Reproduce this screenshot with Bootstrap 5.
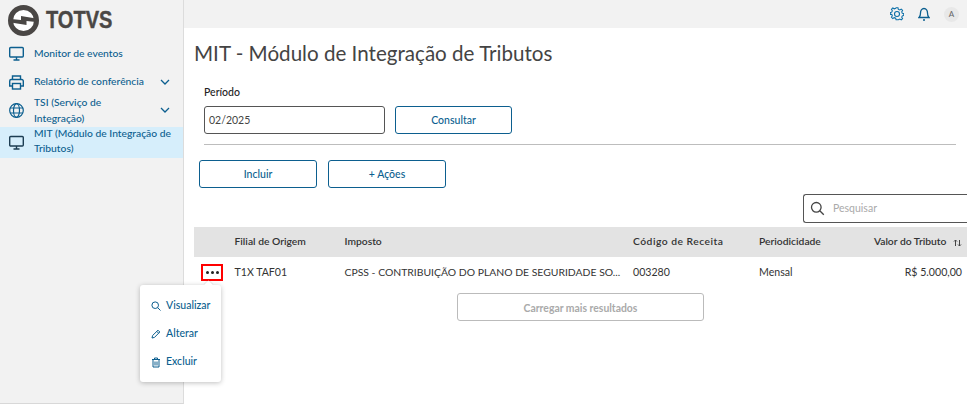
<!DOCTYPE html>
<html lang="pt-BR"><head><meta charset="utf-8">
<link href="https://cdn.jsdelivr.net/npm/bootstrap@5.3.0/dist/css/bootstrap.min.css" rel="stylesheet">
<style>
html,body{height:405px;overflow:hidden;background:#fff}
body{font-family:Lato,"Open Sans",sans-serif;font-size:10.5px;color:#333;position:relative}
.shell{height:405px}
.side{width:184px;flex:none;background:#f2f2f2;border-right:1px solid #dcdcdc;border-bottom:1px solid #d8d8d8;height:404px}
.brand{height:37px;padding:3px 0 0 8px;gap:7px}
.brand-name{display:inline-block;font-family:"Liberation Sans",sans-serif;font-weight:700;font-size:23px;color:#4a4745;line-height:30px;transform:scaleX(.87);transform-origin:left center;-webkit-text-stroke:.4px #4a4745}
.menu-row{display:flex;align-items:center;color:#0c5f8f;font-size:10.3px;line-height:15.5px;font-weight:500;padding:0 13px 0 8px}
.menu-row svg.mi{flex:none;width:17px;height:17px;margin-right:9px}
.menu-row .lbl{flex:1}
.r1{height:33px}
.r2{height:24px}
.r3{height:31px;margin-top:1px}
.r3 .lbl{max-width:100px;margin-right:auto}
.r4{height:31px;background:#d6eefb;padding-right:4px;margin-top:1px}
.r4 .lbl{margin-top:-3px}
.main{flex:1;min-width:0}
.topbar{height:28px;background:#f2f2f2;gap:14px;padding-right:8px}
.avatar{width:15px;height:15px;border-radius:50%;background:#e8e8e8;color:#666;font-size:8px;line-height:15px;text-align:center}
.page{padding:0 0 0 10px}
.ttl{font-size:20.6px;font-weight:400;color:#444;margin:12px 0 0 0;line-height:27px}
.fld{padding-left:10px;margin-top:18px}
.lab{font-size:10.5px;color:#222;line-height:14px;font-weight:500}
.inrow{gap:10px;margin-top:7px}
.inp{width:181px;height:28px;border:1px solid #555;border-radius:3px;color:#444;font-size:10.5px;padding:0 4px;line-height:26px}
.bt{height:28px;border:1px solid #0c5f8f;border-radius:3px;background:#fff;color:#0c5f8f;font-size:10.5px;font-weight:500;line-height:26px;text-align:center;padding:0;width:118px}
.bt-q{width:117px}
.sep{height:1px;background:#bdbdbd;margin:10px 0 0 10px;width:752px}
.acts{gap:11px;margin:15px 0 0 5px}
.srow{margin-top:6px;height:29px}
.srch{width:165px;height:29px;border:1px solid #555;border-right-color:#888;border-radius:3px 0 0 3px;color:#aaa;font-size:10.5px;gap:8px;padding-left:6px;margin-right:-1px}
.thead,.trow{display:flex;align-items:center}
.thead{height:30px;background:#e3e3e3;margin-top:4px;font-weight:600;color:#333;font-size:10.3px}
.trow{height:30px;color:#333;font-size:10.6px}
.trow .c1,.trow .c2,.trow .c3,.trow .c4,.trow .c5{padding-top:2px}
.c0{width:40.5px;flex:none}.c1{width:110px;flex:none}.c2{width:288.5px;flex:none;white-space:nowrap;padding-right:8px}.c3{width:126px;flex:none}.c4{width:96px;flex:none}.c5{flex:1;text-align:right;padding-right:5px;white-space:nowrap}
.trow .c2{font-size:10.4px}
.hc3{letter-spacing:.5px}
.dots{width:22px;height:17px;border:2px solid #f00;margin-left:7px;display:flex;align-items:center;justify-content:center;gap:2px}
.dots i{width:3px;height:3px;background:#222;border-radius:50%;display:block}
.more{width:247px;height:28px;border:1px solid #bbb;border-radius:3px;background:#fff;color:#aaa;font-weight:700;font-size:10.4px;line-height:26px;text-align:center;margin:6px 0 0 263px}
.pop{position:absolute;left:140px;top:285px;width:81px;height:97px;background:#fff;border-radius:3px;box-shadow:0 1px 5px rgba(0,0,0,.25);z-index:5;padding-top:7px}
.pop::before{content:"";position:absolute;left:65px;top:-3px;width:7px;height:7px;background:#fff;transform:rotate(45deg);box-shadow:-1px -1px 1px rgba(0,0,0,.08)}
.pit{display:flex;align-items:center;height:28px;padding-left:11px;gap:5px;color:#0c5f8f;font-size:10.5px;font-weight:500}
</style></head><body>
<div class="d-flex shell">
<aside class="side">
<div class="brand d-flex align-items-center">
<svg width="31" height="31" viewBox="0 0 31 31"><circle cx="15.500" cy="15.500" r="13" fill="#fff" stroke="#4a4745" stroke-width="5"/><polygon points="13,11 28,13.500 28,17 18.500,16 18.500,20 3,17.500 3,14 13,15" fill="#4a4745"/></svg>
<span class="brand-name">TOTVS</span>
</div>
<div class="menu-row r1"><svg class="mi" viewBox="0 0 17 17" fill="none" stroke="#0c5f8f" stroke-width="1.400"><rect x="1.700" y="2.500" width="13.600" height="9.500" rx="1"/><path d="M8.500 12v3M5.500 15h6"/></svg><span class="lbl">Monitor de eventos</span></div>
<div class="menu-row r2"><svg class="mi" viewBox="0 0 17 17" fill="none" stroke="#0c5f8f" stroke-width="1.400"><path d="M4.500 5.500V2h8v3.500"/><path d="M4 12H1.700V7a1.500 1.500 0 0 1 1.500-1.500h10.600A1.500 1.500 0 0 1 15.300 7v5H13"/><rect x="4.500" y="9.500" width="8" height="5.500"/></svg><span class="lbl">Relatório de conferência</span><svg width="10" height="7" viewBox="0 0 10 7" fill="none" stroke="#0c5f8f" stroke-width="1.300"><path d="M1 1l4 4 4-4"/></svg></div>
<div class="menu-row r3"><svg class="mi" viewBox="0 0 17 17" fill="none" stroke="#0c5f8f" stroke-width="1.200"><circle cx="8.500" cy="8.500" r="6.800"/><ellipse cx="8.500" cy="8.500" rx="3" ry="6.800"/><path d="M2 6h13M2 11h13"/></svg><span class="lbl">TSI (Serviço de Integração)</span><svg width="10" height="7" viewBox="0 0 10 7" fill="none" stroke="#0c5f8f" stroke-width="1.300"><path d="M1 1l4 4 4-4"/></svg></div>
<div class="menu-row r4"><svg class="mi" viewBox="0 0 17 17" fill="none" stroke="#1d3d52" stroke-width="1.400"><rect x="1.700" y="2.500" width="13.600" height="9.500" rx="1"/><path d="M8.500 12v3M5.500 15h6"/></svg><span class="lbl">MIT (Módulo de Integração de Tributos)</span></div>
</aside>
<main class="main">
<div class="topbar d-flex align-items-center justify-content-end">
<svg width="14" height="14" viewBox="0 0 14 14" fill="none" stroke="#0c6fa8" stroke-width="1.100"><path d="M6 1h2l.4 1.700 1.500.6 1.500-.9 1.400 1.400-.9 1.500.6 1.500 1.500.2v2l-1.500.4-.6 1.500.9 1.500-1.400 1.300-1.500-.9-1.500.6L8 13.500H6l-.4-1.600-1.500-.6-1.500.9-1.400-1.300.9-1.500-.6-1.500L0 8V6l1.500-.4.600-1.500-.9-1.500 1.400-1.400 1.500.9 1.500-.6z" transform="translate(.3 -.2) scale(.96)"/><circle cx="7" cy="7" r="2.500"/></svg>
<svg width="12" height="14" viewBox="0 0 12 14" fill="none" stroke="#0c5f8f" stroke-width="1.300"><path d="M1 10.500h10c-1.200-1-1.500-2-1.500-4.500S8.200 1.500 6 1.500 2.500 3.500 2.500 6 2.200 9.500 1 10.500z"/><path d="M5 13h2" stroke-width="1.500"/></svg>
<div class="avatar">A</div>
</div>
<div class="page">
<h1 class="ttl">MIT - Módulo de Integração de Tributos</h1>
<div class="fld">
<div class="lab">Período</div>
<div class="inrow d-flex"><div class="inp">02/2025</div><button class="bt bt-q" type="button">Consultar</button></div>
</div>
<div class="sep"></div>
<div class="acts d-flex"><button class="bt" type="button">Incluir</button><button class="bt" type="button">+ Ações</button></div>
<div class="srow d-flex justify-content-end"><div class="srch d-flex align-items-center"><svg width="15" height="15" viewBox="0 0 15 15" fill="none" stroke="#444" stroke-width="1.300"><circle cx="6.300" cy="6.300" r="4.800"/><path d="M9.800 9.800l4 4"/></svg><span>Pesquisar</span></div></div>
<div class="thead"><div class="c0"></div><div class="c1">Filial de Origem</div><div class="c2">Imposto</div><div class="c3 hc3">Código de Receita</div><div class="c4">Periodicidade</div><div class="c5">Valor do Tributo <svg class="ms-1" width="9" height="8" viewBox="0 0 9 8" fill="none" stroke="#444" stroke-width="1"><path d="M2.500 7V1M1 2.500l1.500-1.500L4 2.500M6.500 1v6M5 5.500L6.500 7 8 5.500"/></svg></div></div>
<div class="trow"><div class="c0"><div class="dots"><i></i><i></i><i></i></div></div><div class="c1">T1X TAF01</div><div class="c2">CPSS - CONTRIBUIÇÃO DO PLANO DE SEGURIDADE SO...</div><div class="c3">003280</div><div class="c4">Mensal</div><div class="c5">R$ 5.000,00</div></div>
<button class="more d-block" type="button">Carregar mais resultados</button>
</div>
</main>
</div>
<div class="pop">
<div class="pit"><svg width="10" height="10" viewBox="0 0 10 10" fill="none" stroke="#0c5f8f" stroke-width="1"><circle cx="4.200" cy="4.200" r="3.300"/><path d="M6.600 6.600L9.500 9.500"/></svg>Visualizar</div>
<div class="pit"><svg width="10" height="10" viewBox="0 0 10 10" fill="none" stroke="#0c5f8f" stroke-width="1"><path d="M1 9l.6-2.500L7 1.200 8.800 3 3.500 8.400z"/><path d="M5.800 2.400L7.600 4.200"/></svg>Alterar</div>
<div class="pit"><svg width="10" height="11" viewBox="0 0 10 11" fill="none" stroke="#0c5f8f" stroke-width="1"><path d="M1 2.500h8M3.500 2.500V1h3v1.500M2 2.500V10h6V2.500M4 4.500v4M6 4.500v4"/></svg>Excluir</div>
</div>
<script src="https://cdn.jsdelivr.net/npm/bootstrap@5.3.0/dist/js/bootstrap.bundle.min.js"></script>
</body></html>
